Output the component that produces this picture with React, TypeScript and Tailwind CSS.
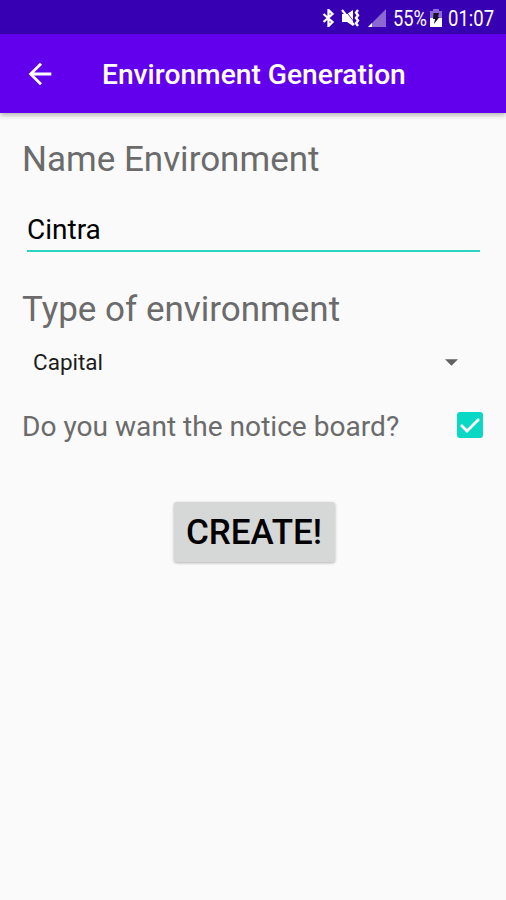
import React, { useState } from "react";

const StatusBar = (): React.ReactElement => {
  return (
    <div className="h-[34px] bg-[#3700b3] flex items-center justify-end pr-[11px] pt-px text-white">
      <svg className="w-[13px] h-[18px] mr-[6px]" viewBox="0 0 12 18" fill="none">
        <path
          d="M1 5l9 8-4 4V1l4 4-9 8"
          stroke="currentColor"
          strokeWidth="2.3"
        />
      </svg>
      <svg className="w-[19px] h-[18px] mr-2" viewBox="0 0 19 18" fill="none">
        <path d="M1 5h5l6-4v16l-6-4H1z" fill="currentColor" />
        <path d="M3 0l11 14" stroke="#3700b3" strokeWidth="0.8" />
        <path d="M1 1l12 15" stroke="currentColor" strokeWidth="2.2" />
        <path
          d="M17 1l-2 2.700 2 2.600-2 2.700 2 2.600-2 2.700 2 2.600"
          stroke="currentColor"
          strokeWidth="2.4"
        />
      </svg>
      <svg className="w-[18px] h-[18px] mr-[7px]" viewBox="0 0 18 18">
        <path d="M18 0v18H0z" fill="#8c68d2" />
        <path d="M4 14v4H0z" fill="currentColor" />
      </svg>
      <span className="w-[35px] pt-[2px] text-[22px] leading-none whitespace-nowrap">
        <span className="inline-block origin-left scale-x-[0.83]">55%</span>
      </span>
      <svg className="w-3 h-[18px] mr-[6px] ml-[2px]" viewBox="0 0 12 18">
        <path d="M3 0h6v2h3v7H0V2h3z" fill="#8c68d2" />
        <path d="M0 9h12v9H0z" fill="currentColor" />
        <path d="M3.500 4H9L8 8h1.500L4 15l1-5H3z" fill="#17102b" />
      </svg>
      <span className="w-[47px] pt-[2px] text-[22px] leading-none whitespace-nowrap">
        <span className="inline-block origin-left scale-x-[0.84]">01:07</span>
      </span>
    </div>
  );
};

const AppBar = ({ title }: { title: string }): React.ReactElement => {
  return (
    <header className="h-[79px] bg-[#6200ee] flex items-center text-white shadow-[0_2px_5px_rgba(0,0,0,0.3)]">
      <button className="ml-[23px] w-[34px] h-[34px]" aria-label="Back">
        <svg viewBox="0 0 24 24" fill="currentColor">
          <path d="M20 11H7.830l5.590-5.590L12 4l-8 8 8 8 1.410-1.410L7.830 13H20v-2z" />
        </svg>
      </button>
      <h1 className="ml-[45px] pt-[3px] text-[28.200px] font-medium leading-none whitespace-nowrap">
        {title}
      </h1>
    </header>
  );
};

const App = (): React.ReactElement => {
  const [name, setName] = useState<string>("Cintra");
  const [noticeBoard, setNoticeBoard] = useState<boolean>(true);

  const changeName = (e: React.ChangeEvent<HTMLInputElement>): void => {
    setName(e.target.value);
  };

  return (
    <div className="w-full h-screen bg-[#fafafa] font-['Roboto',sans-serif] overflow-hidden">
      <StatusBar />
      <AppBar title="Environment Generation" />
      <main className="pl-[22px] pr-[23px] pt-[26px] flex flex-col">
        <label className="text-[35px] leading-[41px] text-[#6b6b6b]">
          Name Environment
        </label>
        <input
          className="ml-[5px] mr-[3px] mt-[28px] h-[44px] text-[28px] text-black border-b-2 border-[#2bd3c0] focus:outline-none"
          value={name}
          onChange={changeName}
        />
        <label className="mt-[37px] text-[35px] leading-[41px] text-[#6b6b6b]">
          Type of environment
        </label>
        <button className="mt-[19px] h-7 pl-[11px] pr-[25px] flex items-center justify-between text-[22.500px] text-[#1c1c1c]">
          Capital
          <svg className="w-[13px] h-[7px] mb-px" viewBox="0 0 14 7" fill="#616161">
            <path d="M0 0h14L7 7z" />
          </svg>
        </button>
        <div className="mt-[32px] h-[34px] flex items-center justify-between">
          <p className="pt-[2px] text-[28.100px] leading-[34px] text-[#6b6b6b]">
            Do you want the notice board?
          </p>
          <button
            className="mb-[2px] w-[26px] h-[26px] rounded-[3px] bg-[#0bd8c4] flex items-center justify-center"
            onClick={() => setNoticeBoard(!noticeBoard)}
            aria-label="Notice board"
          >
            {noticeBoard ? (
              <svg className="w-5 h-[15px]" viewBox="0 0 20 15" fill="none">
                <path d="M1 7l6 6L19 1" stroke="white" strokeWidth="2.8" />
              </svg>
            ) : null}
          </button>
        </div>
        <button className="self-center ml-[3px] mt-[59px] w-[161px] h-[60px] pt-[3px] rounded-[3px] bg-[#d6d7d7] text-[35px] font-medium text-black shadow-[0_1px_3px_rgba(0,0,0,0.3)]">
          CREATE!
        </button>
      </main>
    </div>
  );
};

export default App;
